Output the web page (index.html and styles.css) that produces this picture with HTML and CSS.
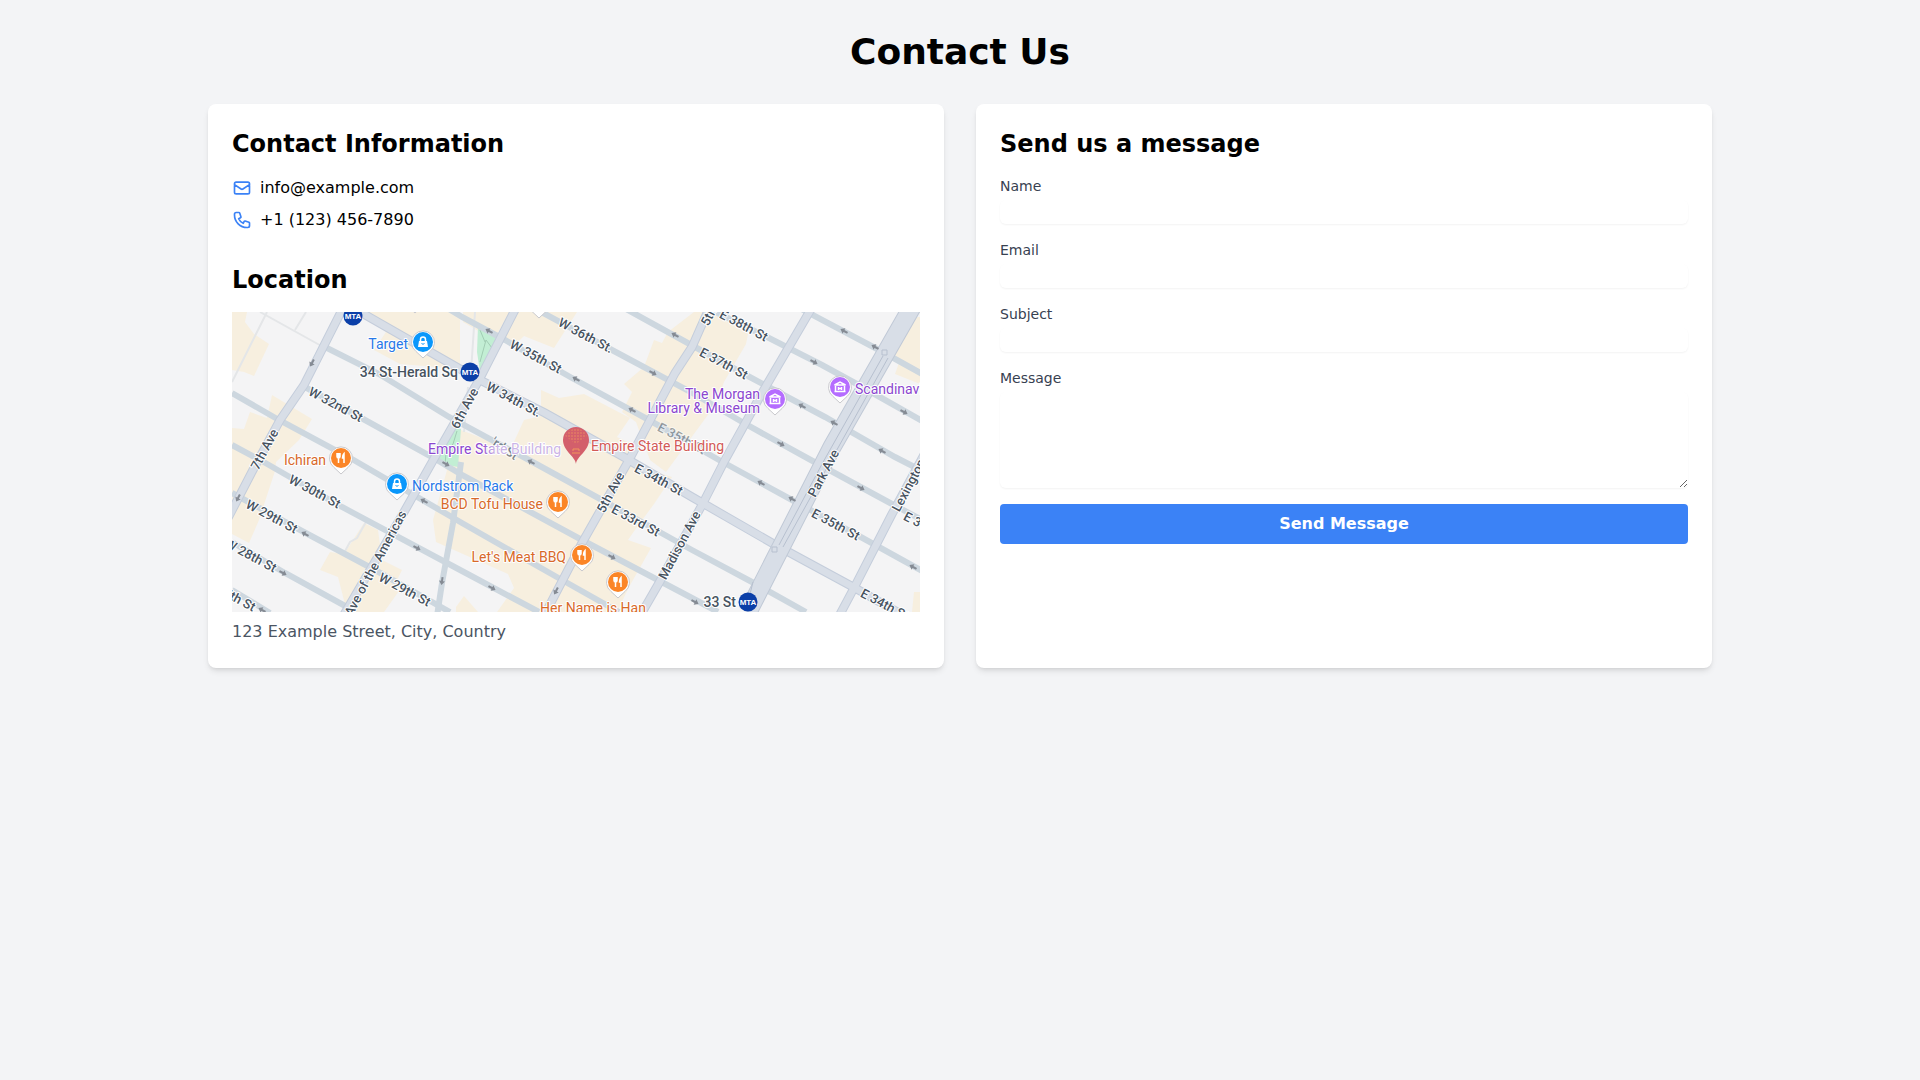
FILE: index.html
```html
<!DOCTYPE html>
<html lang="en">
<head>
<meta charset="utf-8">
<meta name="viewport" content="width=device-width, initial-scale=1">
<title>Contact Us</title>
<link rel="stylesheet" href="styles.css">
</head>
<body>
<main class="container">
  <h1 class="page-title">Contact Us</h1>
  <div class="columns">
    <section class="card">
      <h2 class="card-title">Contact Information</h2>
      <div class="contact-list">
        <div class="contact-row">
          <svg class="icon" viewBox="0 0 24 24" aria-hidden="true"><path d="M3 8l7.89 5.26a2 2 0 002.22 0L21 8M5 19h14a2 2 0 002-2V7a2 2 0 00-2-2H5a2 2 0 00-2 2v10a2 2 0 002 2z"/></svg>
          <span>info@example.com</span>
        </div>
        <div class="contact-row">
          <svg class="icon" viewBox="0 0 24 24" aria-hidden="true"><path d="M3 5a2 2 0 012-2h3.28a1 1 0 01.948.684l1.498 4.493a1 1 0 01-.502 1.21l-2.257 1.13a11.042 11.042 0 005.516 5.516l1.13-2.257a1 1 0 011.21-.502l4.493 1.498a1 1 0 01.684.949V19a2 2 0 01-2 2h-1C9.716 21 3 14.284 3 6V5z"/></svg>
          <span>+1 (123) 456-7890</span>
        </div>
      </div>
      <h2 class="card-title">Location</h2>
      <svg class="map" viewBox="0 0 688 300" preserveAspectRatio="xMidYMid slice" role="img" aria-label="Map of the area around the Empire State Building">
        <defs>
          <path id="arrow" d="M-4 -1H0V-3L4 0L0 3V1H-4Z"/>
          <path id="pin" d="M0 16L-7 9.500A11.500 11.500 0 1 1 7 9.500Z"/>
          <g id="food"><use href="#pin" class="pin-edge"/><circle r="10" fill="#fb8527"/><path class="glyph" d="M-4 -5V-1.500Q-4 0 -2.500 0T-1 -1.500V-5M-2.500 -5V5M3 5V-4.500Q1.500 -3 1.500 0H3"/></g>
          <g id="shop"><use href="#pin" class="pin-edge"/><circle r="10" fill="#0a97fb"/><path fill="#fff" d="M-4 -1H4L5 5H-5Z"/><path class="glyph" d="M-2.500 -1V-2.500A2.500 2.500 0 0 1 2.500 -2.500V-1"/><path d="M-1.500 1.500Q0 3 1.500 1.500" stroke="#0a97fb" fill="none"/></g>
          <g id="museum"><use href="#pin" class="pin-edge"/><circle r="10" fill="#b56cff"/><path class="glyph" d="M-5.500 -2L0 -5L5.500 -2ZM-4.500 -1V4M4.500 -1V4M-5.500 4.500H5.500M-1.500 0V3M1.500 0V3M-1.500 1.500H1.500"/></g>
          <g id="mta"><circle r="9.500" fill="#0b3fa8"/><text class="mta-text" text-anchor="middle" y="3">MTA</text></g>
          <linearGradient id="fade"><stop offset=".4" stop-color="#8b46cf"/><stop offset=".5" stop-color="#cbb4e6"/></linearGradient>
          <pattern id="dots" width="3" height="3" patternUnits="userSpaceOnUse"><circle cx="1" cy="1" r=".7" fill="#f0965c"/></pattern>
        </defs>

        <rect width="688" height="300" fill="#f4f4f5"/>

        <g fill="#f7efdf">
          <path d="M0 0H15L13 10L22 22L37 32L22 64L12 60L0 58Z"/>
          <path d="M130 0H228V57L168 52L142 38L154 20Z"/>
          <path d="M231 0H278L258 34L248 20L231 10Z"/>
          <path d="M283 0H345L322 36L292 24L284 32L270 26Z"/>
          <path d="M40 83L80 107L67 128L44 150L43 159L27 208L17 231L0 222V116L12 117L18 100L35 106Z"/>
          <path d="M309 78L327 86L352 82L398 106L385 125L402 133L392 150L440 165L422 192L405 215L396 228L419 236L397 275L385 300H265L282 276L276 262L240 246L204 230L201 208L215 158L205 150L229 118L260 130L275 145L292 108L309 104Z"/>
          <path d="M422 28L430 31L436 20L462 0H478L516 22L514 32L492 70L488 82L474 93L478 100L434 160L418 148L404 110L390 100L400 80L392 72L412 55Z"/>
          <path d="M132 211L146 218L150 248L170 258L165 268L172 272L152 300H115L106 265L88 258L98 240L112 242Z"/>
          <path d="M665 5H688V72L663 62L668 48L660 40Z"/>
          <path d="M224 295L232 284L246 300H224ZM682 280H688V300H680Z"/>
        </g>
        <g fill="#c2eed4">
          <path d="M246 14L264 23L262 38L248 60L245 40Z"/>
          <path d="M222 114L229 117L226 155L205 151Z"/>
        </g>
        <path d="M248 50L254 28L260 36M253 30L248 18M225 119L221 132L214 140L213 154" fill="none" stroke="#a2cdb4"/>

        <g fill="none" stroke="#e4e6e8" stroke-width="2">
          <path d="M35 0L0 70M28 0L93 36M74 0L63 18M243 0L239 60M112 241L118 230L125 226L134 210M236 75L232 120"/>
        </g>

        <g fill="none" stroke="#cdd7df" stroke-width="6">
          <path d="M560 -8L647 38L692 63"/>
          <path d="M463 -10L535 25L590 53L623 71L692 110"/>
          <path d="M385 -8L463 35L514 63L593 105L663 145L692 160"/>
          <path d="M300 -5L380 38L457 79L517 114L577 147L660 192L692 209"/>
          <path d="M212 -6L230 5L273 28L340 66L417 108L487 148L560 188L627 224L692 260"/>
          <path d="M93 35L147 62L217 105L297 148L370 188L460 238L520 270L574 300"/>
          <path d="M73 75L133 108L200 145L230 163L350 228L460 286L486 300"/>
          <path d="M0 81L47 108L120 147L230 211L323 264L387 300"/>
          <path d="M0 133L30 149L110 195L230 259L307 300"/>
          <path d="M0 181L70 219L143 258L218 300"/>
          <path d="M0 230L53 261L124 300"/>
          <path d="M0 278L38 301"/>
          <path d="M229 150L221 211L210 271L205 304"/>
        </g>

        <g fill="none" stroke="#c4cddb" stroke-width="9">
          <path id="wide" d="M130 1L228 57L250 69L313 101L390 144L460 185L540 231L623 276L676 306M113 -8L72 73L48 108L22 156L-4 206M286 -8L247 68L203 145L172 200L110 306M479 -8L460 35L443 61L397 148L350 231L312 304M582 -8L530 81L493 148L470 193L427 271L408 304M700 128L660 202L622 276L606 306"/>
        </g>
        <g fill="none" stroke="#d8dee7" stroke-width="7">
          <path d="M130 1L228 57L250 69L313 101L390 144L460 185L540 231L623 276L676 306M113 -8L72 73L48 108L22 156L-4 206M286 -8L247 68L203 145L172 200L110 306M479 -8L460 35L443 61L397 148L350 231L312 304M582 -8L530 81L493 148L470 193L427 271L408 304M700 128L660 202L622 276L606 306"/>
        </g>
        <g fill="none">
          <path d="M684 -12L600 135L516 300" stroke="#c0c9d6" stroke-width="19"/>
          <path d="M684 -12L600 135L516 300" stroke="#d8dee7" stroke-width="17"/>
          <path d="M651 44L590 152L547 233M656 46L597 152L551 235" stroke="#b7c0cf"/>
          <path d="M650 38h5v5h-5ZM540 235h5v5h-5ZM521 270L518 282" stroke="#b7c0cf"/>
        </g>

        <g fill="#858b94">
          <use href="#arrow" transform="translate(80 51) rotate(118)"/>
          <use href="#arrow" transform="translate(6 186) rotate(118)"/>
          <use href="#arrow" transform="translate(73 222) rotate(208)"/>
          <use href="#arrow" transform="translate(51 261) rotate(28)"/>
          <use href="#arrow" transform="translate(30 298) rotate(208)"/>
          <use href="#arrow" transform="translate(192 189) rotate(208)"/>
          <use href="#arrow" transform="translate(185 236) rotate(28)"/>
          <use href="#arrow" transform="translate(210 269) rotate(98)"/>
          <use href="#arrow" transform="translate(214 152) rotate(28)"/>
          <use href="#arrow" transform="translate(257 19) rotate(208)"/>
          <use href="#arrow" transform="translate(344 67) rotate(208)"/>
          <use href="#arrow" transform="translate(400 98) rotate(208)"/>
          <use href="#arrow" transform="translate(421 61) rotate(28)"/>
          <use href="#arrow" transform="translate(443 23) rotate(208)"/>
          <use href="#arrow" transform="translate(299 150) rotate(208)"/>
          <use href="#arrow" transform="translate(612 19) rotate(208)"/>
          <use href="#arrow" transform="translate(643 35) rotate(208)"/>
          <use href="#arrow" transform="translate(582 50) rotate(28)"/>
          <use href="#arrow" transform="translate(672 100) rotate(28)"/>
          <use href="#arrow" transform="translate(570 94) rotate(208)"/>
          <use href="#arrow" transform="translate(602 111) rotate(208)"/>
          <use href="#arrow" transform="translate(549 132) rotate(28)"/>
          <use href="#arrow" transform="translate(650 139) rotate(208)"/>
          <use href="#arrow" transform="translate(380 245) rotate(28)"/>
          <use href="#arrow" transform="translate(260 276) rotate(28)"/>
          <use href="#arrow" transform="translate(324 279) rotate(118)"/>
          <use href="#arrow" transform="translate(529 171) rotate(208)"/>
          <use href="#arrow" transform="translate(560 187) rotate(208)"/>
          <use href="#arrow" transform="translate(629 176) rotate(28)"/>
          <use href="#arrow" transform="translate(681 255) rotate(208)"/>
          <use href="#arrow" transform="translate(463 290) rotate(28)"/>
        </g>

        <g class="label street road" text-anchor="middle">
          <text transform="translate(104 92) rotate(28)" y="5">W 32nd St</text>
          <text transform="translate(354 23) rotate(28)" y="5">W 36th St.</text>
          <text transform="translate(304 44) rotate(28)" y="5">W 35th St</text>
          <text transform="translate(282 87) rotate(28)" y="5">W 34th St.</text>
          <text transform="translate(512 13) rotate(28)" y="5">E 38th St</text>
          <text transform="translate(492 51) rotate(28)" y="5">E 37th St</text>
          <text transform="translate(83 179) rotate(28)" y="5">W 30th St</text>
          <text transform="translate(40 204) rotate(28)" y="5">W 29th St</text>
          <text transform="translate(19 243) rotate(28)" y="5">W 28th St</text>
          <text transform="translate(-2 282) rotate(28)" y="5">W 27th St</text>
          <text transform="translate(173 277) rotate(28)" y="5">W 29th St</text>
          <text transform="translate(427 167) rotate(28)" y="5">E 34th St</text>
          <text transform="translate(404 208) rotate(28)" y="5">E 33rd St</text>
          <text transform="translate(604 212) rotate(28)" y="5">E 35th St</text>
          <text transform="translate(653 292) rotate(28)" y="5">E 34th St</text>
          <text transform="translate(696 215) rotate(28)" y="5">E 36th St</text>
          <text transform="translate(450 126) rotate(28)" y="5" opacity=".5">E 35th St</text>
          <text transform="translate(273 136) rotate(34)" y="5" opacity=".65">'rd St</text>
          <text transform="translate(232 96) rotate(-62)" y="5">6th Ave</text>
          <text transform="translate(32 137) rotate(-62)" y="5">7th Ave</text>
          <text transform="translate(378 180) rotate(-62)" y="5">5th Ave</text>
          <text transform="translate(482 -7) rotate(-62)" y="5">5th Ave</text>
          <text transform="translate(447 233) rotate(-62)" y="5">Madison Ave</text>
          <text transform="translate(591 161) rotate(-62)" y="5">Park Ave</text>
          <text transform="translate(143 251) rotate(-62)" y="5">Ave of the Americas</text>
          <text transform="translate(682 162) rotate(-62)" y="5">Lexington Ave</text>
        </g>

        <use href="#food" x="183" y="-15"/>
        <use href="#food" x="307" y="-10"/>
        <use href="#shop" x="191" y="30"/>
        <use href="#food" x="109" y="146"/>
        <use href="#shop" x="165" y="172"/>
        <use href="#food" x="326" y="190"/>
        <use href="#food" x="350" y="243"/>
        <use href="#food" x="386" y="270"/>
        <use href="#museum" x="543" y="87"/>
        <use href="#museum" x="608" y="75"/>
        <use href="#mta" x="121" y="4"/>
        <use href="#mta" x="238" y="60"/>
        <use href="#mta" x="516" y="290"/>

        <g class="label">
          <text class="street" x="226" y="65" text-anchor="end">34 St-Herald Sq</text>
          <text class="street" x="504" y="295" text-anchor="end">33 St</text>
          <g fill="#2878e8">
            <text x="176" y="37" text-anchor="end">Target</text>
            <text x="180" y="179">Nordstrom Rack</text>
          </g>
          <g fill="#d8692a">
            <text x="94" y="153" text-anchor="end">Ichiran</text>
            <text x="311" y="197" text-anchor="end">BCD Tofu House</text>
            <text x="334" y="250" text-anchor="end">Let's Meat BBQ</text>
            <text x="361" y="301" text-anchor="middle">Her Name is Han</text>
          </g>
          <g fill="#8b46cf">
            <text x="528" y="87" text-anchor="end">The Morgan</text>
            <text x="528" y="101" text-anchor="end">Library &amp; Museum</text>
            <text x="623" y="82">Scandinavia House</text>
          </g>
          <text x="196" y="142" fill="url(#fade)">Empire State Building</text>
          <text x="359" y="139" fill="#d25a57">Empire State Building</text>
        </g>

        <path d="M344 152C343 144 331 139 331 128A13 13 0 0 1 357 128C357 139 345 144 344 152Z" fill="#d35f6b"/>
        <path d="M333 124A12 12 0 0 1 355 124L344 132Z" fill="url(#dots)"/>
        <path d="M340 141H348M341 139V137H347V139" fill="none" stroke="#f0965c"/>
      </svg>
      <p class="address">123 Example Street, City, Country</p>
    </section>

    <section class="card">
      <h2 class="card-title">Send us a message</h2>
      <form class="form">
        <div class="field">
          <label for="name">Name</label>
          <input class="control" type="text" id="name" name="name">
        </div>
        <div class="field">
          <label for="email">Email</label>
          <input class="control" type="email" id="email" name="email">
        </div>
        <div class="field">
          <label for="subject">Subject</label>
          <input class="control" type="text" id="subject" name="subject">
        </div>
        <div class="field">
          <label for="message">Message</label>
          <textarea class="control" id="message" name="message" rows="4"></textarea>
        </div>
        <button class="submit" type="submit">Send Message</button>
      </form>
    </section>
  </div>
</main>
</body>
</html>
```
FILE: styles.css
```css
*,
*::before,
*::after {
  box-sizing: border-box;
}

body {
  margin: 0;
  background: #f3f4f6;
  color: #000;
  font: 16px/24px "DejaVu Sans", sans-serif;
}

h1,
h2,
p {
  margin: 0;
}

.container {
  max-width: 1536px;
  margin: 0 auto;
  padding: 32px 16px;
}

.page-title {
  margin-bottom: 32px;
  font-size: 36px;
  line-height: 40px;
  text-align: center;
}

.columns {
  display: grid;
  grid-template-columns: 1fr 1fr;
  gap: 32px;
}

.card {
  min-width: 0;
  padding: 24px;
  border-radius: 8px;
  background: #fff;
  box-shadow: 0 4px 6px -1px rgb(0 0 0 / 0.1), 0 2px 4px -2px rgb(0 0 0 / 0.1);
}

.card-title {
  margin-bottom: 16px;
  font-size: 24px;
  line-height: 32px;
}

.contact-list {
  display: grid;
  gap: 8px;
  margin-bottom: 32px;
}

.contact-row {
  display: flex;
  align-items: center;
  gap: 8px;
}

.icon {
  width: 20px;
  height: 20px;
  fill: none;
  stroke: #3b82f6;
  stroke-width: 2;
  stroke-linecap: round;
  stroke-linejoin: round;
}

.map {
  display: block;
  width: 100%;
  height: 300px;
  margin-bottom: 8px;
  overflow: hidden;
}

.label {
  font: 14px Roboto, sans-serif;
  stroke: #fff;
  stroke-width: 2px;
  stroke-linejoin: round;
  paint-order: stroke;
}

.street {
  fill: #47535f;
  font-weight: 500;
}

.road {
  font-size: 13px;
}

.mta-text {
  fill: #fff;
  font: bold 8px "Liberation Sans", sans-serif;
}

.pin-edge {
  fill: #fff;
  stroke: #c9c9cd;
  stroke-width: 1px;
}

.glyph {
  fill: none;
  stroke: #fff;
  stroke-width: 1.5px;
}

.address {
  color: #4b5563;
}

.form {
  display: grid;
  gap: 16px;
}

.field {
  display: grid;
  gap: 4px;
}

.field label {
  color: #374151;
  font-size: 14px;
  line-height: 20px;
}

.control {
  display: block;
  width: 100%;
  margin: 0;
  padding: 0;
  border: 0;
  border-radius: 6px;
  background: #fff;
  color: inherit;
  font: inherit;
  box-shadow: 0 1px 2px rgb(0 0 0 / 0.05);
}

input.control {
  height: 24px;
}

textarea.control {
  resize: vertical;
}

.submit {
  padding: 8px 16px;
  border: 0;
  border-radius: 4px;
  background: #3b82f6;
  color: #fff;
  font: inherit;
  font-weight: 700;
  cursor: pointer;
}

@media (max-width: 767px) {
  .columns {
    grid-template-columns: 1fr;
  }
}
```
